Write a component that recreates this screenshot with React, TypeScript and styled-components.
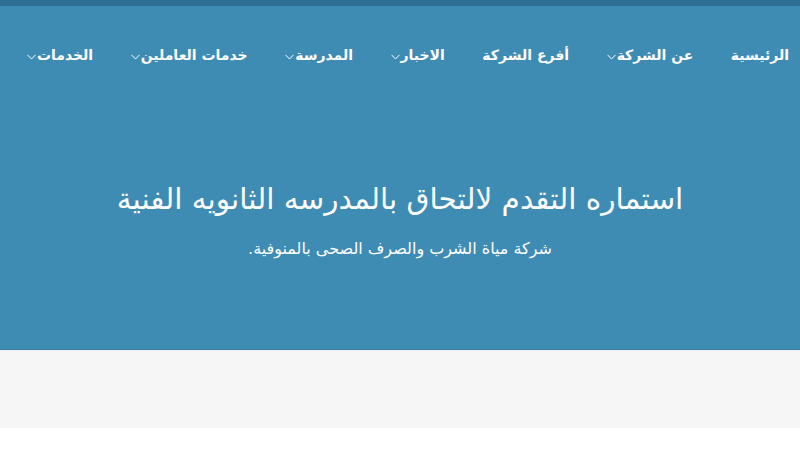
import React from "react";
import styled, { createGlobalStyle } from "styled-components";

const Global = createGlobalStyle`
  html, body { margin: 0; padding: 0; background: #ffffff; }
  body { direction: rtl; font-family: "DejaVu Sans", "Noto Sans", sans-serif; }
  * { box-sizing: border-box; }
`;

const Hero = styled.header`
  background: #3e8bb4;
  border-top: 6px solid #2f6f94;
  border-bottom: 1px solid #3a80a6;
  height: 350px;
  display: flex;
  flex-direction: column;
`;

const Nav = styled.nav`
  display: flex;
  flex-direction: row;
  align-items: center;
  gap: 37.5px;
  padding: 37px 11px 0 0;
  height: 60px;
`;

const NavItem = styled.a`
  display: flex;
  align-items: center;
  gap: 1px;
  color: #ffffff;
  font-weight: bold;
  font-size: 14px;
  text-decoration: none;
  white-space: nowrap;
`;

const Chevron = styled.svg`
  width: 9px;
  height: 6px;
  margin-top: 4px;
`;

const Content = styled.div`
  flex: 1;
  display: flex;
  flex-direction: column;
  align-items: center;
  padding-top: 113px;
`;

const Title = styled.h1`
  margin: 0;
  color: #ffffff;
  font-weight: normal;
  font-size: 29.5px;
  line-height: 40px;
`;

const Subtitle = styled.p`
  margin: 20px 0 0;
  color: #ffffff;
  font-size: 16px;
  line-height: 20px;
`;

const Band = styled.section`
  background: #f6f6f6;
  height: 78px;
  border-top: 1px solid #e8f0f0;
`;

const items: { label: string; menu: boolean }[] = [
  { label: "الرئيسية", menu: false },
  { label: "عن الشركة", menu: true },
  { label: "أفرع الشركة", menu: false },
  { label: "الاخبار", menu: true },
  { label: "المدرسة", menu: true },
  { label: "خدمات العاملين", menu: true },
  { label: "الخدمات", menu: true },
];

export default function App() {
  return (
    <>
      <Global />
      <Hero>
        <Nav>
          {items.map((it) => (
            <NavItem key={it.label} href="#">
              <span>{it.label}</span>
              {it.menu && (
                <Chevron viewBox="0 0 9 6">
                  <path d="M0.5 0.8 L4.5 5 L8.5 0.8" fill="none" stroke="#ffffff" strokeWidth="1" />
                </Chevron>
              )}
            </NavItem>
          ))}
        </Nav>
        <Content>
          <Title>استماره التقدم لالتحاق بالمدرسه الثانويه الفنية</Title>
          <Subtitle>شركة مياة الشرب والصرف الصحى بالمنوفية.</Subtitle>
        </Content>
      </Hero>
      <Band />
    </>
  );
}
